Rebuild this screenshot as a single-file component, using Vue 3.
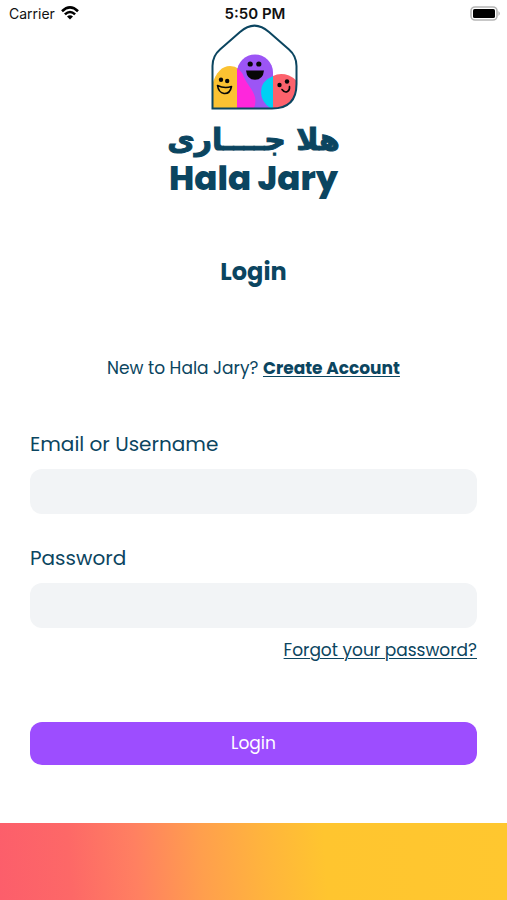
<script setup>
import { ref } from 'vue'

const username = ref('')
const password = ref('')
const houseOutline =
  'M1.5 84.5V42Q1.5 32 9 25.5L29 8Q43.5-4.7 58 8L78 25.5Q85.5 32 85.5 42V60Q85.5 84.5 61 84.5Z'
</script>

<template>
  <div class="screen">
    <header class="status">
      <div class="carrier">
        <span>Carrier</span>
        <svg width="18" height="14" viewBox="0 0 18 14" aria-hidden="true">
          <g fill="none" stroke="#000" stroke-width="2.6">
            <path d="M1 5.2Q9-2.4 17 5.2" />
            <path d="M3.9 8.4Q9 3.6 14.1 8.4" />
          </g>
          <path d="M6 10.6Q9 8 12 10.6L9 13.6Z" />
        </svg>
      </div>
      <span class="time">5:50 PM</span>
      <svg class="battery" width="31" height="15" viewBox="0 0 31 15" aria-hidden="true">
        <rect x="1" y="1" width="26" height="13" rx="4" fill="#fff" stroke="#b5b5b5" stroke-width="1.6" />
        <rect x="3" y="3" width="22" height="9" rx="1.6" />
        <path d="M28.5 5Q31 7.5 28.5 10Z" fill="#a5a5a5" />
      </svg>
    </header>

    <main class="content">
      <div class="brand">
        <svg width="89" height="86" viewBox="-2 0 89 86" aria-hidden="true">
          <defs>
            <clipPath id="house">
              <path :d="houseOutline" />
            </clipPath>
          </defs>
          <g clip-path="url(#house)">
            <path d="M1 86V61C5 48 11 42 19 42Q24 42 28 45L30 86Z" fill="#fbc232" />
            <path d="M26 86V48.5A18 18 0 0 1 62 48.5V86Z" fill="#9c55f5" />
            <path d="M26 44.5Q31 47 33 53C35.5 60 42 65 44 73Q45.5 80 42 86H26Z" fill="#fe27dc" />
            <path d="M62 86V52Q69 48.5 78 51.5Q84 54 88 60V86Z" fill="#fc626c" />
            <path d="M62 52Q50 57 50 68Q50 79 62 86Z" fill="#00d0f4" />
          </g>
          <path :d="houseOutline" fill="none" stroke="#0b4560" stroke-width="2" />
          <g fill="#080808">
            <circle cx="10" cy="55.8" r="2.2" />
            <circle cx="16.2" cy="57" r="2.2" />
            <circle cx="39.2" cy="40" r="2.6" />
            <circle cx="47.8" cy="40" r="2.6" />
            <path d="M35 46.5H53Q52 55.8 44 55.8Q36 55.8 35 46.5Z" />
            <circle cx="68.5" cy="61" r="2.2" />
            <circle cx="76" cy="57.5" r="2.2" />
          </g>
          <path d="M6.5 61.5Q13.5 65 20.5 62.5Q19 70 13 69.5Q7.5 68.5 6.5 61.5Z" fill="#fbc232" stroke="#080808" stroke-width="1.6" stroke-linejoin="round" />
          <path d="M71 65.5Q73.5 69 76.5 67.5Q79 66 78.5 62.5" fill="none" stroke="#080808" stroke-width="1.6" stroke-linecap="round" />
        </svg>
        <p class="arabic" lang="ar" dir="rtl">هلا جــــارى</p>
        <p class="latin">Hala Jary</p>
      </div>

      <h1>Login</h1>
      <p class="signup">New to Hala Jary? <a href="#create">Create Account</a></p>

      <form @submit.prevent>
        <div class="field">
          <label for="username">Email or Username</label>
          <input id="username" v-model="username" type="text" autocomplete="username">
        </div>
        <div class="field">
          <label for="password">Password</label>
          <input id="password" v-model="password" type="password" autocomplete="current-password">
        </div>
        <a class="forgot" href="#forgot">Forgot your password?</a>
        <button type="submit">Login</button>
      </form>
    </main>

    <footer class="band"></footer>
  </div>
</template>

<style>
body {
  margin: 0;
  background: #fff;
}
</style>

<style scoped>
.screen {
  display: flex;
  flex-direction: column;
  min-height: 100vh;
  color: #0b4560;
  font-family: Poppins, Inter, "Open Sans", sans-serif;
}

p,
h1 {
  margin: 0;
}

.status {
  display: grid;
  grid-template-columns: 1fr auto 1fr;
  align-items: center;
  height: 24px;
  padding: 2px 6px 0 9px;
  box-sizing: border-box;
  color: #111;
  font-family: Inter, sans-serif;
  font-size: 14px;
}

.carrier {
  display: flex;
  align-items: center;
  gap: 6px;
}

.time {
  font-size: 15px;
  font-weight: 600;
}

.battery {
  justify-self: end;
}

.content {
  display: flex;
  flex: 1;
  flex-direction: column;
  padding: 0 30px;
}

.brand {
  display: flex;
  flex-direction: column;
  align-items: center;
}

.arabic {
  margin-top: 10px;
  font-family: "DejaVu Sans", sans-serif;
  font-size: 30px;
  font-weight: 700;
  line-height: 40px;
  white-space: nowrap;
  -webkit-text-stroke: 1px currentColor;
}

.latin {
  font-size: 34px;
  font-weight: 800;
  line-height: 36px;
}

h1 {
  margin-top: 58px;
  font-size: 24px;
  font-weight: 700;
  line-height: 36px;
  text-align: center;
}

.signup {
  margin-top: 66px;
  font-size: 17px;
  line-height: 24px;
  text-align: center;
}

a {
  color: inherit;
  text-underline-offset: 2px;
  text-decoration-thickness: 1px;
}

.signup a {
  font-weight: 700;
}

form {
  display: flex;
  flex-direction: column;
  margin-top: 48px;
}

.field {
  display: flex;
  flex-direction: column;
  gap: 9px;
  margin-bottom: 28px;
}

label {
  font-size: 20px;
  line-height: 32px;
}

input {
  height: 45px;
  box-sizing: border-box;
  padding: 0 16px;
  border: 0;
  border-radius: 12px;
  background: #f2f4f6;
  color: inherit;
  font: inherit;
  font-size: 17px;
}

.forgot {
  align-self: flex-end;
  margin-top: -18px;
  font-size: 17px;
  line-height: 24px;
}

button {
  height: 43px;
  margin-top: 60px;
  padding: 0 16px 2px;
  border: 0;
  border-radius: 12px;
  background: #9d4dff;
  color: #fff;
  font: inherit;
  font-size: 17px;
}

.band {
  height: 77px;
  background: linear-gradient(86deg, #fc5e6b 0%, #fd6867 14%, #ff8061 27%, #ff9f4d 40%, #ffb43d 52%, #ffc52f 64%, #ffc72f 100%);
}
</style>
